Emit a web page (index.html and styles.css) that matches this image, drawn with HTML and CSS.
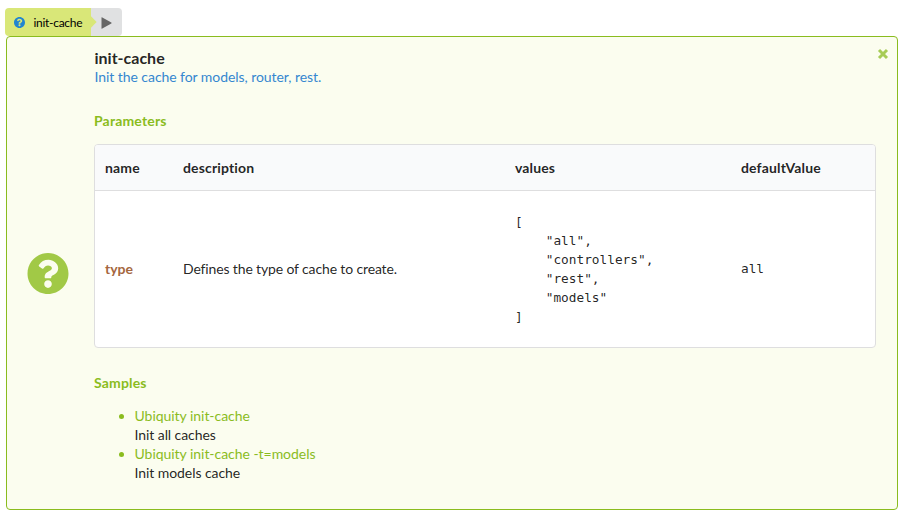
FILE: index.html
```html
<!DOCTYPE html>
<html lang="en">
<head>
<meta charset="utf-8">
<title>init-cache</title>
<link rel="stylesheet" href="styles.css">
</head>
<body>
<svg class="defs" width="0" height="0" aria-hidden="true">
  <symbol id="help" viewBox="8 8 496 496"><path d="M504 256c0 136.997-111.043 248-248 248S8 392.997 8 256C8 119.083 119.043 8 256 8s248 111.083 248 248zM262.655 90c-54.497 0-89.255 22.957-116.549 63.758-3.536 5.286-2.353 12.415 2.715 16.258l34.699 26.31c5.205 3.947 12.621 3.008 16.665-2.122 17.864-22.658 30.113-35.797 57.303-35.797 20.429 0 45.698 13.148 45.698 32.958 0 14.976-12.363 22.667-32.534 33.976C247.128 238.528 216 254.941 216 296v4c0 6.627 5.373 12 12 12h56c6.627 0 12-5.373 12-12v-1.333c0-28.462 83.186-29.647 83.186-106.667 0-58.002-60.165-102-116.531-102zM256 338c-25.365 0-46 20.635-46 46 0 25.364 20.635 46 46 46s46-20.636 46-46c0-25.365-20.635-46-46-46z"/></symbol>
</svg>
<div class="buttons">
  <div class="command"><svg class="command-icon"><use href="#help"/></svg><span>init-cache</span></div>
  <div class="run"><svg class="play" viewBox="0 0 11 12"><path d="M.5.8Q.5 0 1.3.4L10.3 5.4Q11 6 10.3 6.6L1.3 11.6Q.5 12 .5 11.2Z"/></svg></div>
</div>
<main class="message">
  <svg class="big-icon"><use href="#help"/></svg>
  <div class="content">
    <div class="title">init-cache</div>
    <div class="summary">Init the cache for models, router, rest.</div>
    <h2 class="section">Parameters</h2>
    <div class="table">
      <div class="row head"><span>name</span><span>description</span><span>values</span><span>defaultValue</span></div>
      <div class="row body">
        <span class="param">type</span>
        <span class="description">Defines the type of cache to create.</span>
        <pre class="code">[
    "all",
    "controllers",
    "rest",
    "models"
]</pre>
        <span class="code">all</span>
      </div>
    </div>
    <h2 class="section">Samples</h2>
    <ul class="list">
      <li>Ubiquity init-cache<div class="note">Init all caches</div></li>
      <li>Ubiquity init-cache -t=models<div class="note">Init models cache</div></li>
    </ul>
  </div>
  <svg class="close" viewBox="0 0 12 12"><path d="M2 2L10 10M10 2L2 10"/></svg>
</main>
</body>
</html>
```
FILE: styles.css
```css
* { box-sizing: border-box; }
body {
  margin: 0;
  padding: 8px 7px 0 5px;
  background: #fff;
  color: rgba(0, 0, 0, .87);
  font: 14px/19px Lato, "Liberation Sans", sans-serif;
}
.defs { position: absolute; }
.buttons { display: flex; height: 28px; }
.command {
  position: relative;
  display: flex;
  align-items: center;
  width: 86px;
  padding-left: 9px;
  background: #d9e778;
  border-radius: 4px 0 0 4px;
  font-size: 12px;
  letter-spacing: -.3px;
  color: #000;
}
.command::after {
  content: "";
  position: absolute;
  left: 82px;
  top: 10px;
  width: 8px;
  height: 8px;
  background: #d9e778;
  transform: rotate(45deg);
}
.command-icon { width: 11px; height: 11px; margin: 1px 8.5px 0 0; fill: #2185d0; }
.command span { margin-top: 1px; }
.run {
  display: flex;
  align-items: center;
  width: 31px;
  padding-left: 10px;
  background: #e0e1e2;
  border-radius: 0 4px 4px 0;
}
.play { width: 11px; height: 12px; margin-top: 1px; fill: #666; }
.message {
  display: flex;
  height: 474px;
  margin-left: 1px;
  border: 1px solid #8abc1e;
  border-radius: 4px;
  background: #fbfdef;
}
.big-icon { width: 42px; height: 41px; align-self: center; margin-left: 20px; fill: #a1c946; }
.content { width: 782px; margin-left: 25px; padding-top: 12px; }
.title { padding-left: .5px; font-size: 16px; font-weight: 700; line-height: 18px; }
.summary { padding-left: .5px; color: #3587d0; letter-spacing: -.06px; }
.section { margin: 25px 0 0; font-size: 14px; line-height: 19px; font-weight: 700; letter-spacing: .17px; color: #8abc1e; }
.table {
  margin-top: 14px;
  height: 204px;
  border: 1px solid #dededf;
  border-radius: 4px;
  background: #fff;
  overflow: hidden;
}
.row {
  display: grid;
  grid-template-columns: 78px 332px 226px 1fr;
  align-items: center;
  padding-left: 10px;
}
.head { height: 46px; background: #f9fafb; border-bottom: 1px solid #dededf; font-weight: 700; letter-spacing: .14px; }
.body { height: 156px; }
.param { margin-top: -1px; color: #a5673f; font-weight: 700; }
.description { margin-top: -1px; letter-spacing: -.14px; }
.code { margin: 0; font: 12.78px/19px "DejaVu Sans Mono", monospace; }
span.code { margin-top: -1px; }
.list { margin: 14px 0 0; padding-left: 40.5px; color: #8abc1e; letter-spacing: -.04px; }
.note { color: rgba(0, 0, 0, .87); letter-spacing: -.07px; }
.close {
  flex: none;
  width: 12px;
  height: 12px;
  margin: 11px 0 0 1px;
  fill: none;
  stroke: #a7cc56;
  stroke-width: 3;
}
```
